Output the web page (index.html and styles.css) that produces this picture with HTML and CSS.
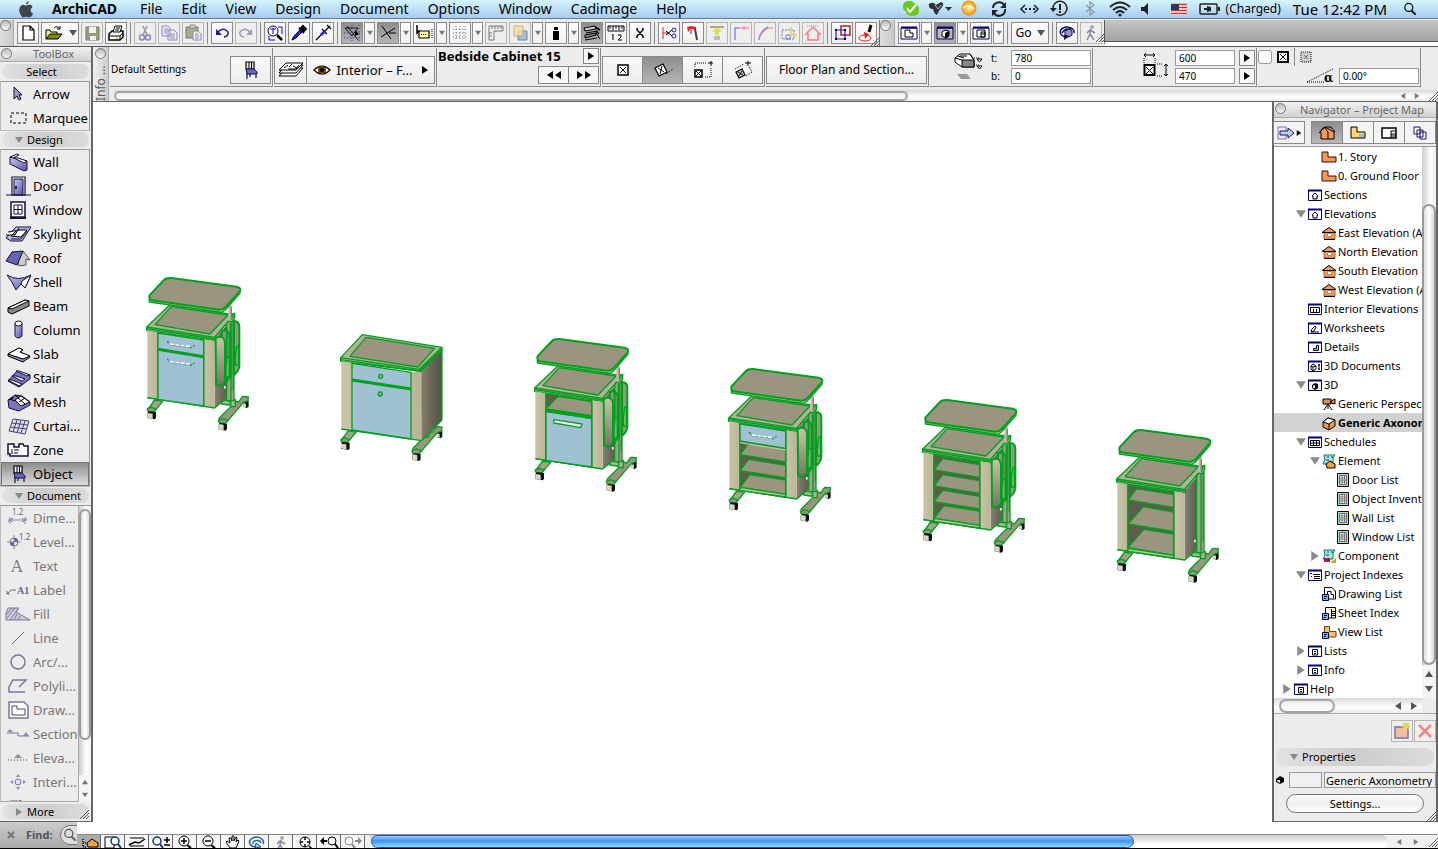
FILE: index.html
```html
<!DOCTYPE html>
<html lang="en">
<head>
<meta charset="utf-8">
<title>ArchiCAD</title>
<link rel="stylesheet" href="styles.css">
</head>
<body>
<svg class="defs" aria-hidden="true">
  <defs>
    <linearGradient id="g-side" x1="0" x2="1"><stop offset="0" stop-color="#858170"/><stop offset=".5" stop-color="#69665a"/><stop offset="1" stop-color="#555246"/></linearGradient>
    <linearGradient id="g-panel" x1="0" x2="1"><stop offset="0" stop-color="#c9c4a8"/><stop offset="1" stop-color="#bab596"/></linearGradient>
    <linearGradient id="g-bag" x1="0" y1="0" x2="0" y2="1"><stop offset="0" stop-color="#c9c4a8"/><stop offset="1" stop-color="#77735f"/></linearGradient>
    <linearGradient id="g-blue" x1="0" x2="1" y2="1"><stop offset="0" stop-color="#c8c8f4"/><stop offset="1" stop-color="#5555a8"/></linearGradient>
    <radialGradient id="g-sun"><stop offset="0" stop-color="#fff6c0"/><stop offset=".6" stop-color="#f8b830"/><stop offset="1" stop-color="#f08a10"/></radialGradient>

    <g id="foot-left"><path d="M74 420L98 424L76 450L52 450Z" fill="#a5a08a"/><path d="M52 447L64 442L78 447L72 455L54 454Z" fill="#99957f"/><path class="nl" d="M52 460L56 454L78 456V474L74 478L52 474Z" fill="#111"/><path class="nl" d="M52 459L68 461V477L52 473Z" fill="#dcd5c0"/></g>
    <g id="foot-right"><path class="nl" d="M342 425L356 422V440L350 444L340 440Z" fill="#111"/><path class="nl" d="M340 430L348 431V442L340 440Z" fill="#dcd5c0"/><path d="M275 420L320 424L318 438L275 432Z" fill="#b5b099"/><path d="M300 420L326 426L338 409L355 410L354 422L340 428L292 484L266 484L268 474L302 440Z" fill="#99957f"/><path d="M302 418H316V440H302Z" fill="#b5b099"/><path d="M265 482L278 476L294 482L286 490L268 489Z" fill="#99957f"/><path class="nl" d="M266 494L270 489L291 491V508L286 512L266 508Z" fill="#111"/><path class="nl" d="M266 492L281 494V511L266 508Z" fill="#dcd5c0"/></g>
    <g id="frame">
      <path class="nl" d="M254 236L304 180V390L285 418L254 444Z" fill="url(#g-side)"/>
      <path d="M290 180H312V422H290Z" fill="#a5a08a"/><path d="M303 180V420M310 180V390" fill="none"/>
      <path d="M286 168L314 160V174L306 184H288Z" fill="#a5a08a"/>
      <path d="M50 201L120 134L312 164L256 230V242L50 211Z" fill="#b5b099"/>
      <path d="M75 194L124 140L294 165L240 222Z" fill="#99957f"/>
      <path d="M50 201L254 232L308 170M50 206L254 237" fill="none"/>
      <path d="M52 211L84 217V419L52 413Z" fill="url(#g-panel)" class="nl"/><path d="M84 216V419M52 413L84 419" fill="none"/>
      <path class="nl" d="M221 238L254 243V444L221 438Z" fill="url(#g-panel)"/><path d="M221 236V438M52 413L254 444L290 414" fill="none"/>
      <path class="nl" d="M295 134H305V182H295Z" fill="#c9b9ab"/><path d="M304 140V180" fill="none" stroke="#8b7969"/>
      <path d="M58 117V126L276 157L286 150L330 100V88L280 140Z" fill="#c9c4a8"/>
      <path class="thick" d="M59 114Q54 108 66 98L102 60Q108 53 124 54L320 80Q336 84 329 94L290 138Q280 150 266 149L65 121Q59 120 59 114Z" fill="#99957f"/>
    </g>
    <g id="bags">
      <path class="thick" d="M312 183Q328 184 328 200V320Q325 335 312 345Z" fill="#99957f"/>
      <path class="thick" d="M276 212Q298 208 299 228V350Q292 366 277 366Z" fill="#99957f"/>
      <path class="thick" d="M290 208V370M302 190V356M311 184V342" fill="none"/>
      <path class="thick" d="M257 234Q284 222 285 252V365L273 377L258 374Z" fill="url(#g-bag)"/>
      <path d="M291 294L288 320V350H298V290ZM320 260L316 290V315H326V255Z" fill="#79b06b"/><path class="nl" fill="#eee" d="M282 378h5v8h-5z"/>
    </g>
    <g id="pull"><path d="M113 245L120 255L184 263L192 257" fill="none" stroke="#5d8a96" stroke-width="2"/><path d="M120 252L184 260" fill="none" stroke="#fff" stroke-width="4" stroke-dasharray="12 4"/><path class="nl" d="M111 243h5v5h-5zM180 260h5v5h-5zM190 255h4v4h-4z" fill="#00a11e"/></g>
    <g id="drawer"><path d="M84 219L221 240V292L84 270Z" fill="#a0c0d3"/><use href="#pull"/></g>
    <g id="cab-base"><use href="#foot-left"/><use href="#foot-right"/><use href="#frame"/></g>
    <path id="shelf" d="M84 38L110 4L221 22V60Z" fill="#99957f"/>

    <symbol id="new" viewBox="0 0 20 20"><path d="M5 3H12L16 7V17H5ZM12 3V7H16" fill="#fff" stroke="#000" stroke-width="1.200"/></symbol>
    <symbol id="open" viewBox="0 0 20 20"><path d="M2 16V7H6L7 9H13V11" fill="#ee8" stroke="#000"/><path d="M2 16L6 11H18L14 16Z" fill="#880" stroke="#000"/><path d="M10 5Q13 2 16 6M16 3V6H13" fill="none" stroke="#000"/></symbol>
    <symbol id="save" viewBox="0 0 20 20"><path d="M4 4H17V17H4Z" fill="#9b9b79" stroke="#777"/><path d="M7 4H14V10H7ZM8 13H14V17H8Z" fill="#eee"/></symbol>
    <symbol id="print" viewBox="0 0 20 20"><path d="M3 11L6 8H17V14L14 17H3Z" fill="#fff" stroke="#000" stroke-width="1.500"/><path d="M7 9L9 3H16L14 9Z" fill="#fff" stroke="#000"/><path d="M3 13H14L17 10M14 13V17M10 5H14M9 7H13" fill="none" stroke="#000"/><path d="M10 15H12" stroke="#cc0" stroke-width="1.500"/></symbol>
    <symbol id="cut" viewBox="0 0 20 20"><path d="M8 3L12 12M12 3L8 12" stroke="#999" stroke-width="1.500"/><circle cx="7" cy="14.500" r="2.500" fill="none" stroke="#8888bb" stroke-width="1.500"/><circle cx="13" cy="14.500" r="2.500" fill="none" stroke="#8888bb" stroke-width="1.500"/></symbol>
    <symbol id="copy" viewBox="0 0 20 20"><path d="M3 3H9L11 5V13H3ZM9 7H15L18 10V17H9Z" fill="#eee" stroke="#88b"/><path d="M5 6H9M5 8H8M5 10H8M11 11H16M11 13H16M11 15H16" stroke="#88b"/></symbol>
    <symbol id="paste" viewBox="0 0 20 20"><path d="M3 4H15V15H3Z" fill="#aaa988" stroke="#777"/><path d="M7 2H12V5H7Z" fill="#ddc" stroke="#888"/><path d="M10 8H15L18 11V17H10Z" fill="#eee" stroke="#88b"/><path d="M12 11H15M12 13H16M12 15H16" stroke="#88b"/></symbol>
    <symbol id="undo" viewBox="0 0 20 20"><path d="M5 10Q11 3 16 9Q17 13 12 14" fill="none" stroke="#1d1d8c" stroke-width="1.500"/><path d="M4 6V12H10Z" fill="#1d1d8c"/></symbol>
    <symbol id="redo" viewBox="0 0 20 20"><path d="M15 10Q9 3 4 9Q3 13 8 14" fill="none" stroke="#99a" stroke-width="1.500"/><path d="M16 6V12H10Z" fill="#99b"/></symbol>
    <symbol id="findsel" viewBox="0 0 20 20"><circle cx="8" cy="8" r="5" fill="#fff" stroke="#000"/><path d="M12 12L17 17" stroke="#000" stroke-width="2.500"/><path d="M8 5V11M5 6H11M13 4H17V11M4 13V17H10" fill="none" stroke="#00f"/></symbol>
    <symbol id="dropper" viewBox="0 0 20 20"><path d="M3 17L5 13L11 7L13 9L7 15Z" fill="#22f" stroke="#000"/><path d="M10 5L15 10M11 6L14 3L17 6L14 9Z" stroke="#000" stroke-width="2" fill="#000"/></symbol>
    <symbol id="syringe" viewBox="0 0 20 20"><path d="M3 17L8 12M12 8L17 3M14 2L18 6M9 6L14 11" stroke="#000" stroke-width="1.200"/><path d="M7 11L11 7L13 9L9 13Z" fill="#22f"/></symbol>
    <symbol id="guides" viewBox="0 0 20 20"><path d="M3 5H16L10 13ZM5 3L16 17" stroke="#111" fill="none"/><path d="M2 10H18M2 15H18M10 2V18M17 2V18" stroke="#33a" stroke-dasharray="1 2"/><path d="M13 7L17 11L13 13Z"/></symbol>
    <symbol id="snap" viewBox="0 0 20 20"><path d="M4 3L13 16M3 14L17 5M11 10H18" stroke="#000" fill="none"/></symbol>
    <symbol id="track" viewBox="0 0 20 20"><path d="M3 2V10L5 8L7 11" fill="none" stroke="#000" stroke-width="1.500"/><path d="M5 8H15V15H5Z" fill="#ffa" stroke="#000" stroke-width="1.200"/><path d="M7 11.500H13" stroke="#000" stroke-dasharray="1 1"/><path d="M18 6V16" stroke="#000" stroke-dasharray="1 1"/></symbol>
    <symbol id="grid" viewBox="0 0 20 20"><path d="M3 6H18M3 10H18M3 14H18M6 3V18M10 3V18M14 3V18" stroke="#66a" stroke-dasharray="1 2"/></symbol>
    <symbol id="ruler" viewBox="0 0 20 20"><path d="M3 3H17V8H8V17H3Z" fill="none" stroke="#777"/><path d="M6 3V6M9 3V6M12 3V6M15 3V6M3 10H6M3 13H6" stroke="#777"/></symbol>
    <symbol id="layers2" viewBox="0 0 20 20"><path d="M8 8H17V17H8Z" fill="#9cc0dd" stroke="#68a"/><path d="M4 3H13V13H4Z" fill="#f8e0a8" stroke="#c8a050" opacity=".8"/></symbol>
    <symbol id="weight" viewBox="0 0 20 20"><path d="M7 8H13V17H7ZM8 4H12V7H8Z"/></symbol>
    <symbol id="build" viewBox="0 0 20 20"><path d="M2 5L13 3L14 6L3 8ZM4 10L16 8M3 17L15 15M14 10L18 16" stroke="#000" fill="#ccc"/><path d="M3 12L14 10V12L3 15Z" fill="#888" stroke="#000"/><path d="M13 4L18 7M14 8L17 11" stroke="#000" stroke-width="1.500"/></symbol>
    <symbol id="measure" viewBox="0 0 20 20"><path d="M2 3H18V8H2ZM4 3V6M7 3V7M10 3V6M13 3V7M16 3V6" fill="#fff" stroke="#000"/><path d="M7 11V17M6 12H7M12 12H15V14L12 17H16" fill="none" stroke="#000"/></symbol>
    <symbol id="xtick" viewBox="0 0 20 20"><path d="M7 7L13 13M13 7L7 13M6 6H8M14 14H12M6 14H8M14 6H12" stroke="#000" stroke-width="1.500"/></symbol>
    <symbol id="trim" viewBox="0 0 20 20"><path d="M4 4V16M4 10H10" stroke="#d22"/><path d="M7 8L13 13M7 12L13 7" stroke="#000"/><circle cx="15" cy="7" r="2" fill="none" stroke="#228"/><circle cx="15" cy="13" r="2" fill="none" stroke="#228"/></symbol>
    <symbol id="axe" viewBox="0 0 20 20"><path d="M4 4L8 3L13 4V7L8 6L5 9Z" fill="#e22"/><path d="M12 6L14 17" stroke="#633" stroke-width="2"/><path d="M8 7V11" stroke="#22a"/></symbol>
    <symbol id="elev" viewBox="0 0 20 20"><path d="M3 4H17" stroke="#aa7" stroke-width="2"/><path d="M10 4L5 9H8V12H12V9H15Z" fill="#dd5"/><path d="M8 13V17M10 13V17M12 13V17" stroke="#888"/></symbol>
    <symbol id="corner" viewBox="0 0 20 20"><path d="M4 17V5H8" fill="none" stroke="#88e" stroke-width="1.500"/><path d="M8 5H18M13 3V7" stroke="#f77"/></symbol>
    <symbol id="fillet" viewBox="0 0 20 20"><path d="M4 17Q5 8 13 4" fill="none" stroke="#88e" stroke-width="1.500"/><path d="M12 5H18M4 14L9 8L13 5" stroke="#f77" fill="none"/></symbol>
    <symbol id="stretch" viewBox="0 0 20 20"><path d="M3 7H15V16H3Z" fill="none" stroke="#77a" stroke-dasharray="2 1"/><path d="M7 12H11V16H7Z" fill="none" stroke="#77d"/><path d="M12 4V12H18" fill="none" stroke="#dd5" stroke-width="1.500"/></symbol>
    <symbol id="roofup" viewBox="0 0 20 20"><path d="M4 3H16" stroke="#88b" stroke-dasharray="1 1"/><path d="M2 12L10 4L18 12M5 10V17H15V10" fill="none" stroke="#f77" stroke-width="1.500"/></symbol>
    <symbol id="editsel" viewBox="0 0 20 20"><path d="M9 3H18V12H9Z" fill="none" stroke="#a22" stroke-width="1.500"/><path d="M4 7H13V16H4Z" fill="none" stroke="#22a" stroke-width="1.200"/><path d="M3 6h2v2h-2zM12 6h2v2h-2zM3 15h2v2h-2zM12 15h2v2h-2z"/></symbol>
    <symbol id="pin" viewBox="0 0 20 20"><ellipse cx="9" cy="15" rx="6" ry="3" fill="none" stroke="#e22"/><path d="M15 2L13 9" stroke="#200" stroke-width="3"/><path d="M8 9L13 11L9 16Z" fill="#d22"/></symbol>
    <symbol id="plan" viewBox="0 0 20 20"><path d="M2 5H18V16H2Z" fill="#fff" stroke="#006"/><path d="M2 4.500H18" stroke="#006" stroke-width="2"/><path d="M6 7H11V10H14V14H6Z" fill="none" stroke="#000"/></symbol>
    <symbol id="cubewin" viewBox="0 0 20 20"><path d="M2 5H18V16H2Z" fill="#bbb" stroke="#006"/><path d="M2 4.500H18" stroke="#006" stroke-width="2"/><path d="M7 9L10 7L14 8V13L11 15L7 13Z" fill="#fff" stroke="#000"/><path d="M10 10L14 8V13L10 15Z"/></symbol>
    <symbol id="sheet" viewBox="0 0 20 20"><path d="M2 5H18V16H2Z" fill="#fff" stroke="#006"/><path d="M2 4.500H18" stroke="#006" stroke-width="2"/><path d="M6 7H14V14H6ZM10 9H14V14H10ZM10 11H14" fill="none" stroke="#000"/></symbol>
    <symbol id="orbit" viewBox="0 0 20 20"><path d="M9 14A7 5 0 1 1 17 10M5 10Q9 4 14 7" fill="none" stroke="#116" stroke-width="1.500"/><path d="M8 8L12 6L15 8V12L12 14L8 12Z" fill="#99b" stroke="#116"/><path d="M7 17L13 13L7 12Z" fill="#116"/></symbol>
    <symbol id="walk" viewBox="0 0 20 20"><circle cx="11" cy="4" r="2" fill="#9aaabb"/><path d="M10 6L9 11L6 17M9 11L13 17M6 10L9 7L14 10" fill="none" stroke="#8888a0" stroke-width="1.500"/></symbol>
    <symbol id="chair" viewBox="0 0 20 20"><path d="M5 2H13V9H5Z" fill="#eee" stroke="#000" stroke-width="1.200"/><path d="M8 2V9M10.500 2V9" stroke="#000"/><path d="M5 9H13L16 12V14H6Z" fill="#66b" stroke="#114"/><path d="M6 13V19M15 14V18M9 14V17" stroke="#114" stroke-width="1.200"/></symbol>
    <symbol id="stack" viewBox="0 0 30 20"><g fill="#fff" stroke="#000"><path d="M3 16L10 8H27L20 16Z"/><path d="M3 13L10 5H27L20 13Z"/><path d="M3 10L10 3H27L20 10Z"/><path d="M8 8L12 5M13 7L16 4M12 9H20L23 5M17 6L21 8"/></g></symbol>
    <symbol id="eye" viewBox="0 0 20 20"><path d="M2 10Q10 2 18 10Q10 18 2 10Z" fill="#fff" stroke="#000" stroke-width="1.200"/><circle cx="10" cy="10" r="4" fill="#753c00"/><circle cx="10" cy="10" r="2"/></symbol>
    <symbol id="an1" viewBox="0 0 20 20"><path d="M5 5H15V15H5Z" fill="#fff" stroke="#000" stroke-width="1.500"/><path d="M7 7L13 13M13 7L7 13" stroke="#000"/></symbol>
    <symbol id="an2" viewBox="0 0 20 20"><path d="M2 8L10 4L14 12L6 16Z" fill="#fff" stroke="#000" stroke-width="1.200"/><path d="M5 8L11 12M9 6L7 14" stroke="#000"/><path d="M13 14L20 9" stroke="#000" stroke-dasharray="1 1"/></symbol>
    <symbol id="an3" viewBox="0 0 20 20"><path d="M2 10H9V17H2Z" fill="#fff" stroke="#000" stroke-width="1.500"/><path d="M3 11L8 16M8 11L3 16M18 1V6M15 3H20" stroke="#000"/><path d="M2 7V3H14M18 8V17H11" fill="none" stroke="#000" stroke-dasharray="1 1"/></symbol>
    <symbol id="an4" viewBox="0 0 20 20"><path d="M3 12L9 9L12 15L6 18Z" fill="#ccc" stroke="#000" stroke-width="1.200"/><path d="M5 12L10 15M9 11L6 16M15 1V6M12 3H18" stroke="#000"/><path d="M2 9L11 4M16 7L19 12L13 16" fill="none" stroke="#000" stroke-dasharray="1 1"/></symbol>

    <symbol id="arrow" viewBox="0 0 26 20"><path d="M9 3V15L12 12L14 16L16 15L14 11H17Z" fill="#99c" stroke="#113"/></symbol>
    <symbol id="marquee" viewBox="0 0 26 20"><path d="M6 5H21V15H6Z" fill="none" stroke="#000" stroke-dasharray="3 2"/></symbol>
    <symbol id="wall" viewBox="0 0 26 20"><path d="M5 5L22 9V18L19 19L5 12Z" fill="url(#g-blue)" stroke="#113"/><path d="M5 5L12 2L14 3L8 6ZM13 6L22 9L19 11L9 6Z" fill="#fff" stroke="#113"/></symbol>
    <symbol id="door" viewBox="0 0 26 20"><path d="M7 1H20V19H7Z" fill="#fff" stroke="#113" stroke-width="1.200"/><path d="M9 3H18V19H9Z" fill="url(#g-blue)" stroke="#113"/><path d="M1 19H26" stroke="#113"/><path d="M11 10v3" stroke="#000" stroke-width="1.500"/></symbol>
    <symbol id="window" viewBox="0 0 26 20"><path d="M6 2H20V17H6Z" fill="#fff" stroke="#114" stroke-width="1.500"/><path d="M9 5H17V14H9ZM13 5V14M9 9.500H17" fill="none" stroke="#114"/><path d="M5 18H21" stroke="#114" stroke-width="2"/></symbol>
    <symbol id="skylight" viewBox="0 0 26 20"><path d="M1 14L11 3H26L17 17H6Z" fill="#b8b8e6" stroke="#114"/><path d="M6 12L12 6H22L16 13ZM1 11H10L14 4" fill="#fff" stroke="#000"/><path d="M3 8L14 6M6 15H16L22 7" fill="none" stroke="#114"/></symbol>
    <symbol id="roof" viewBox="0 0 26 20"><path d="M18 3L25 12L21 11V17L14 18L13 14Z" fill="#ccc" stroke="#555"/><path d="M1 13L7 4L18 3L12 17Z" fill="#6565b4" stroke="#114"/></symbol>
    <symbol id="shell" viewBox="0 0 26 20"><path d="M2 3Q13 10 26 3L20 16L16 12L11 18Q7 9 2 3Z" fill="url(#g-blue)" stroke="#114"/><path d="M17 9L26 3L20 16L16 12Z" fill="#fff" stroke="#114"/></symbol>
    <symbol id="beam" viewBox="0 0 26 20"><path d="M3 12L20 4L24 5V10L7 18L3 16Z" fill="#888" stroke="#000"/><path d="M3 12L20 4L24 5L7 13Z" fill="#fff" stroke="#000"/></symbol>
    <symbol id="column" viewBox="0 0 26 20"><path d="M10 3V16Q13 20 17 16V3" fill="url(#g-blue)" stroke="#114"/><ellipse cx="13.500" cy="3.500" rx="3.500" ry="2.500" fill="#fff" stroke="#114"/></symbol>
    <symbol id="slab" viewBox="0 0 26 20"><path d="M3 10L14 4L18 6L15 8L25 13L18 18L3 12Z" fill="#88c" stroke="#000"/><path d="M3 10L14 4L18 6L15 8L25 12L18 15Z" fill="#fff" stroke="#000"/></symbol>
    <symbol id="stair" viewBox="0 0 26 20"><path d="M3 13L12 3L25 7V11L14 19Z" fill="#77b" stroke="#114"/><path d="M11 3H14L25 7L22 8ZM7 8H11L20 11L17 13ZM3 12H7L17 16L14 18Z" fill="#fff" stroke="#114"/></symbol>
    <symbol id="mesh" viewBox="0 0 26 20"><path d="M3 8L10 3L17 4L25 10V13L14 19L4 16Z" fill="#77b" stroke="#114"/><path d="M10 8L16 4L25 10L16 14ZM13 6L20 12M10 3L14 6M5 7L10 9M14 10L20 6M4 8L9 5" fill="#fff" stroke="#000"/></symbol>
    <symbol id="curtain" viewBox="0 0 26 20"><path d="M8 3L24 5L20 18L4 15Z" fill="#dde" stroke="#447"/><path d="M12 4L8 16M16 4L12 17M20 5L16 17M7 7L23 9M5 11L22 13" stroke="#447"/></symbol>
    <symbol id="zone" viewBox="0 0 26 20"><path d="M3 4H9V7H14V4H18L19 6H23V16H5V14H3Z" fill="#fff" stroke="#114" stroke-width="1.500"/><path d="M9 10H14M9 13H13M7 9V14" stroke="#000"/></symbol>
    <symbol id="object" viewBox="0 0 26 20"><use href="#chair" x="4" width="20" height="20"/></symbol>
    <symbol id="dim" viewBox="0 0 26 20"><text x="7" y="7" class="svgtxt">1.2</text><path d="M3 12H22M5 9V16M20 9V16M3 14L7 10M18 14L22 10M8 10L5 12L8 14M17 10L20 12L17 14" fill="none" stroke="#88a"/></symbol>
    <symbol id="level" viewBox="0 0 26 20"><text x="14" y="8" class="svgtxt">1.2</text><circle cx="9" cy="10" r="4" fill="#fff" stroke="#668"/><path d="M9 10V6A4 4 0 0 1 13 10ZM9 10V14A4 4 0 0 1 5 10Z" fill="#668"/><path d="M2 10H16M9 3V17" stroke="#88a"/></symbol>
    <symbol id="text" viewBox="0 0 26 20"><text x="6" y="16" class="svgserif">A</text></symbol>
    <symbol id="label" viewBox="0 0 26 20"><text x="12" y="14" class="svgbold">A1</text><path d="M2 14L6 10H11M2 11V14H5" fill="none" stroke="#668"/></symbol>
    <symbol id="fill" viewBox="0 0 26 20"><path d="M3 4H14L11 8L25 16H1V9Z" fill="#ccd" stroke="#779"/><path d="M2 10L7 4M2 14L10 4M5 16L13 5M9 16L12 10M13 16L15 12" stroke="#779"/></symbol>
    <symbol id="line" viewBox="0 0 26 20"><path d="M7 16L19 4" stroke="#668"/></symbol>
    <symbol id="arc" viewBox="0 0 26 20"><circle cx="13" cy="10" r="7" fill="none" stroke="#779" stroke-width="1.500"/></symbol>
    <symbol id="poly" viewBox="0 0 26 20"><path d="M20 16H4V11L8 4H21L14 11" fill="none" stroke="#779" stroke-width="1.500"/></symbol>
    <symbol id="drawing" viewBox="0 0 26 20"><path d="M4 2H19L23 6V18H4Z" fill="#fff" stroke="#779" stroke-width="1.500"/><path d="M7 6H12V9H20V15H7Z" fill="none" stroke="#446"/></symbol>
    <symbol id="section" viewBox="0 0 26 20"><path d="M2 9H13V12H24" fill="none" stroke="#779"/><path d="M2 8L5 5L8 8ZM18 12L21 8L24 12Z" fill="#88b"/></symbol>
    <symbol id="elevation" viewBox="0 0 26 20"><path d="M3 12H24" stroke="#446" stroke-dasharray="1 2"/><path d="M9 10L13 6L17 10Z" fill="#88b"/></symbol>
    <symbol id="interior" viewBox="0 0 26 20"><circle cx="13" cy="10" r="3" fill="#ddf" stroke="#779"/><path d="M11 5L13 2L15 5ZM11 15L13 18L15 15ZM8 8L5 10L8 12ZM18 8L21 10L18 12Z" fill="#88b"/></symbol>
    <symbol id="worksheet" viewBox="0 0 26 20"><path d="M5 5H13V18H5ZM11 8L15 4L20 8V18H11Z" fill="#dde" stroke="#668"/></symbol>

    <symbol id="t-story" viewBox="0 0 16 16"><path d="M1 3H7V8H15V13H1Z" fill="#f4985a" stroke="#311"/></symbol>
    <symbol id="t-house" viewBox="0 0 16 16"><path d="M3 7V14H14V7Z" fill="#f4985a" stroke="#a63"/><path d="M1 7.500L8 2.500L15 7.500Z" fill="#f4985a" stroke="#000"/><path d="M3 14.500H14" stroke="#000"/><path d="M6.500 8.500H10.500V11.500H6.500Z" fill="#fff" stroke="#996"/></symbol>
    <symbol id="w" viewBox="0 0 16 16"><path d="M1.500 3.500H14.500V13.500H1.500Z" fill="#fff" stroke="#000078"/><path d="M1 3.500H15" stroke="#000078" stroke-width="2"/></symbol>
    <symbol id="t-sec" viewBox="0 0 16 16"><use href="#w"/><path d="M5 9L8 6L11 9H10V12H6V9Z" fill="none" stroke="#000"/></symbol>
    <symbol id="t-int" viewBox="0 0 16 16"><use href="#w"/><path d="M3.500 6.500H12.500V11.500H3.500ZM6.500 8V11M9.500 8V11" fill="none" stroke="#000"/></symbol>
    <symbol id="t-wor" viewBox="0 0 16 16"><use href="#w"/><path d="M4 12L5 9L8 6L9 7L7 11ZM4 12H12" fill="none" stroke="#000"/></symbol>
    <symbol id="t-det" viewBox="0 0 16 16"><use href="#w"/><path d="M9.500 6.500H11.500V11.500H6.500V9.500H9.500Z" fill="#ccc" stroke="#000"/></symbol>
    <symbol id="t-doc" viewBox="0 0 16 16"><use href="#w"/><path d="M4 8L6 6L9 8V11L6 13L4 11ZM4 8L6 9L9 8M6 9V12M12 6V12M11 7H13M11 11H13" fill="none" stroke="#000"/></symbol>
    <symbol id="t-3d" viewBox="0 0 16 16"><use href="#w"/><path d="M5 8L8 6L11 7V11L8 13L5 11Z"/><path d="M6 9L8 8V11L6 11Z" fill="#fff"/></symbol>
    <symbol id="t-cam" viewBox="0 0 16 16"><path d="M2 3H10V8H2ZM10 5L14 3V8L10 7Z" fill="#e98a4a" stroke="#000"/><path d="M7 8L3 14M7 8V13M7 8L11 14" stroke="#000"/></symbol>
    <symbol id="t-axo" viewBox="0 0 16 16"><path d="M2 7L7 3L14 5V11L8 15L2 12Z" fill="#f4985a" stroke="#000"/><path d="M2 7L7 3L14 5L8 9Z" fill="#fff" stroke="#000"/><path d="M8 9V15" stroke="#000"/></symbol>
    <symbol id="t-sch" viewBox="0 0 16 16"><use href="#w"/><path d="M3.500 6.500H12.500V11.500H3.500ZM3 9H13M6.500 6V12M9.500 6V12" fill="none" stroke="#000"/></symbol>
    <symbol id="t-elem" viewBox="0 0 16 16"><path d="M3 2H14L12 5V11H2L4 7Z" fill="#a9ecdc" stroke="#175"/><path d="M6 4H8M10 4H12M5 7H8" stroke="#22a"/><path d="M5 11L9 8L14 11V15H6Z" fill="#f4a040" stroke="#000"/></symbol>
    <symbol id="t-comp" viewBox="0 0 16 16"><path d="M3 2H14L12 5V11H2L4 7Z" fill="#a9ecdc" stroke="#175"/><path d="M6 4H8M10 4H12M5 7H8" stroke="#22a"/><path d="M3 10H9V14H3Z" fill="#a12050"/><path d="M9 15L15 10V15Z" fill="#d8a020"/></symbol>
    <symbol id="t-list" viewBox="0 0 16 16"><path d="M2.500 1.500H13.500V14.500H2.500Z" fill="#a6e2cc" stroke="#000"/><path d="M4.500 3.500H11.500V12.500H4.500Z" fill="#fff" stroke="#666"/><path d="M4 6H12M4 8H12M4 10H12M7 4V13M9.500 4V13" stroke="#777"/></symbol>
    <symbol id="t-idx" viewBox="0 0 16 16"><use href="#w"/><path d="M3 6.500H5M6 7.500H13M4 9.500H5M7 9.500H13M7 11.500H13" stroke="#000"/></symbol>
    <symbol id="t-dl" viewBox="0 0 16 16"><path d="M3.500 1.500H11L14.500 5V13H3.500Z" fill="#fff" stroke="#000"/><path d="M6.500 9V5.500H10V8.500H12.500V12" fill="none" stroke="#000"/><path d="M1.500 8.500H7.500V14.500H1.500Z" fill="#7bb9f0" stroke="#003"/><path d="M3 10.500H6M3 12.500H5" stroke="#003"/></symbol>
    <symbol id="t-si" viewBox="0 0 16 16"><path d="M4.500 2.500H14.500V13H4.500Z" fill="#ffd" stroke="#000"/><path d="M10.500 4V13M11 6.500H15M11 8.500H15M11 10.500H15" stroke="#000"/><path d="M1.500 8.500H7.500V14.500H1.500Z" fill="#7bb9f0" stroke="#003"/><path d="M3 10.500H6M3 12.500H5" stroke="#003"/></symbol>
    <symbol id="t-vl" viewBox="0 0 16 16"><path d="M3.500 2.500H8.500V7.500H15V13H3.500Z" fill="#f0c070" stroke="#642"/><path d="M1.500 8.500H7.500V14.500H1.500Z" fill="#7bb9f0" stroke="#003"/><path d="M3 10.500H6M3 12.500H5" stroke="#003"/></symbol>
    <symbol id="t-info" viewBox="0 0 16 16"><use href="#w"/><path d="M5.500 6.500H10.500V12H5.500ZM7 8.500H9M7 10.500H9" fill="none" stroke="#000"/></symbol>

    <symbol id="glass" viewBox="0 0 20 20"><circle cx="8.500" cy="8" r="5" fill="none" stroke="currentColor" stroke-width="1.500"/><path d="M12 12L17 17" stroke="currentColor" stroke-width="2.500"/></symbol>
    <symbol id="grip" viewBox="0 0 10 10"><path d="M1 10L10 1M4 10L10 4M7 10L10 7" stroke="#555"/></symbol>
    <symbol id="tri-r" viewBox="0 0 8 8"><path d="M1 0L7 4L1 8Z" fill="currentColor"/></symbol>
    <symbol id="tri-l" viewBox="0 0 8 8"><path d="M7 0L1 4L7 8Z" fill="currentColor"/></symbol>
    <symbol id="tri-d" viewBox="0 0 8 8"><path d="M0 1H8L4 7Z" fill="currentColor"/></symbol>
    <symbol id="tri-u" viewBox="0 0 8 8"><path d="M0 7H8L4 1Z" fill="currentColor"/></symbol>
  </defs>
</svg>

<header class="menubar">
  <svg class="apple" viewBox="0 0 16 18"><path d="M8 5Q10 3.500 12.500 4Q14 4.500 15 6Q12.500 8 13 10.500Q13.500 12.500 15.500 13.500Q13.500 17.500 11.500 17.500Q10 16.800 8.500 16.800Q7 16.800 5.500 17.500Q3.500 17.500 1.500 13Q0 9 1.500 6.500Q3 4 5 4Q7 4.500 8 5ZM8 3.500Q8 1 11 0Q11 3 8 3.500Z" fill="#3f454b"/></svg>
  <nav class="menus"><a href="#" class="app">ArchiCAD</a><a href="#">File</a><a href="#">Edit</a><a href="#">View</a><a href="#">Design</a><a href="#">Document</a><a href="#">Options</a><a href="#">Window</a><a href="#">Cadimage</a><a href="#">Help</a></nav>
  <div class="status">
    <svg viewBox="0 0 30 18"><rect x="7" y="1" width="12" height="11" rx="5" fill="#6cc81e"/><rect x="10" y="4" width="13" height="12" rx="5" fill="#6cc81e"/><path d="M11 8L14 12L20 5" fill="none" stroke="#fff" stroke-width="2"/></svg>
    <svg viewBox="0 0 30 18"><path d="M3 4Q7 1 10 5L15 2Q19 3 16 7Q13 10 11 15Q8 14 7 9Q2 9 3 4Z" fill="#333"/><path d="M9 5L12 9L15 5" stroke="#bbb" fill="none"/><path d="M19 7H26L22.500 11Z" fill="#333"/></svg>
    <svg viewBox="0 0 30 18"><circle cx="13" cy="8" r="7.500" fill="url(#g-sun)"/><path d="M7 8Q12 3 18 9" stroke="#fff" fill="none" stroke-width="2" opacity=".7"/></svg>
    <svg viewBox="0 0 30 18"><path d="M7 8A6 6 0 0 1 18 5M19 9A6 6 0 0 1 8 13" fill="none" stroke="#222" stroke-width="2"/><path d="M20 2V8H14ZM6 16V10H12Z" fill="#222"/></svg>
    <svg viewBox="0 0 30 18"><path d="M9 5L5 9L9 13M18 5L22 9L18 13" fill="none" stroke="#222" stroke-width="1.500"/><path d="M9 9H19" stroke="#222" stroke-width="2" stroke-dasharray="2 2"/></svg>
    <svg viewBox="0 0 30 18"><path d="M7 9A7 7 0 1 1 10 14" fill="none" stroke="#222" stroke-width="1.500"/><path d="M4 8H11L7 12ZM13 4H15V10H13ZM13 11H15V13H13Z" fill="#222"/></svg>
    <svg viewBox="0 0 30 18"><path d="M10 5L18 12L14 15V2L18 5L10 12" fill="none" stroke="#8b98a8" stroke-width="1.200"/></svg>
    <svg viewBox="0 0 30 18"><path d="M4 7Q14-2 24 7M7 10Q14 4 21 10M10 13Q14 9 18 13" fill="none" stroke="#222" stroke-width="2"/><circle cx="14" cy="15" r="1.500" fill="#222"/></svg>
    <svg viewBox="0 0 30 18"><path d="M5 7H8L12 3V15L8 11H5Z" fill="#222"/></svg>
    <svg viewBox="0 0 30 18"><path d="M5 4H21V15H5Z" fill="#fff"/><path d="M5 4.500H21M5 7.500H21M5 10.500H21M5 13.500H21" stroke="#d92a2a" stroke-width="1.500"/><path d="M5 4H13V10H5Z" fill="#335"/></svg>
    <svg viewBox="0 0 30 18"><rect x="4" y="4" width="17" height="10" rx="1" fill="none" stroke="#222" stroke-width="1.500"/><path d="M22 7H24V11H22ZM8 8H11V6L15 7V11L11 12V10H8Z" fill="#222"/></svg>
    <span class="charged">(Charged)</span><span class="clock">Tue 12:42 PM</span>
    <svg class="spot" viewBox="0 0 20 20"><use href="#glass"/></svg>
  </div>
</header>

<div class="toolbar">
  <span class="handle"><i class="knob"></i></span>
  <button class="tb" aria-label="New"><svg><use href="#new"/></svg></button>
  <button class="tb wide" aria-label="Open"><svg><use href="#open"/></svg><svg class="t8"><use href="#tri-d"/></svg></button>
  <button class="tb dim" aria-label="Save"><svg><use href="#save"/></svg></button>
  <button class="tb" aria-label="Print"><svg><use href="#print"/></svg></button>
  <i class="sep"></i>
  <button class="tb dim" aria-label="Cut"><svg><use href="#cut"/></svg></button>
  <button class="tb dim" aria-label="Copy"><svg><use href="#copy"/></svg></button>
  <button class="tb dim" aria-label="Paste"><svg><use href="#paste"/></svg></button>
  <i class="sep"></i>
  <button class="tb" aria-label="Undo"><svg><use href="#undo"/></svg></button>
  <button class="tb dim" aria-label="Redo"><svg><use href="#redo"/></svg></button>
  <i class="sep"></i>
  <button class="tb" aria-label="Find and Select"><svg><use href="#findsel"/></svg></button>
  <button class="tb" aria-label="Pick up parameters"><svg><use href="#dropper"/></svg></button>
  <button class="tb" aria-label="Inject parameters"><svg><use href="#syringe"/></svg></button>
  <i class="sep"></i>
  <span class="split"><button class="tb on" aria-label="Guide lines"><svg><use href="#guides"/></svg></button><button class="tb slim" aria-label="Guide options"><svg class="t6"><use href="#tri-d"/></svg></button></span>
  <span class="split"><button class="tb on" aria-label="Snap"><svg><use href="#snap"/></svg></button><button class="tb slim" aria-label="Snap options"><svg class="t6"><use href="#tri-d"/></svg></button></span>
  <span class="split"><button class="tb" aria-label="Tracker"><svg><use href="#track"/></svg></button><button class="tb slim" aria-label="Tracker options"><svg class="t6"><use href="#tri-d"/></svg></button></span>
  <span class="split"><button class="tb" aria-label="Grid"><svg><use href="#grid"/></svg></button><button class="tb slim" aria-label="Grid options"><svg class="t6"><use href="#tri-d"/></svg></button></span>
  <button class="tb dim" aria-label="Rulers"><svg><use href="#ruler"/></svg></button>
  <span class="split"><button class="tb dim" aria-label="Trace"><svg><use href="#layers2"/></svg></button><button class="tb slim" aria-label="Trace options"><svg class="t6"><use href="#tri-d"/></svg></button></span>
  <span class="split"><button class="tb" aria-label="Gravity"><svg><use href="#weight"/></svg></button><button class="tb slim" aria-label="Gravity options"><svg class="t6"><use href="#tri-d"/></svg></button></span>
  <button class="tb on" aria-label="Groups"><svg><use href="#build"/></svg></button>
  <button class="tb" aria-label="Measure"><svg><use href="#measure"/></svg></button>
  <button class="tb" aria-label="Intersect"><svg><use href="#xtick"/></svg></button>
  <i class="sep"></i>
  <button class="tb" aria-label="Trim"><svg><use href="#trim"/></svg></button>
  <button class="tb" aria-label="Split"><svg><use href="#axe"/></svg></button>
  <button class="tb dim" aria-label="Adjust"><svg><use href="#elev"/></svg></button>
  <button class="tb dim" aria-label="Corner"><svg><use href="#corner"/></svg></button>
  <button class="tb dim" aria-label="Fillet"><svg><use href="#fillet"/></svg></button>
  <button class="tb dim" aria-label="Stretch"><svg><use href="#stretch"/></svg></button>
  <button class="tb dim" aria-label="Roof"><svg><use href="#roofup"/></svg></button>
  <i class="sep"></i>
  <button class="tb" aria-label="Edit selection"><svg><use href="#editsel"/></svg></button>
  <button class="tb" aria-label="Marker"><svg><use href="#pin"/></svg></button>
  <span class="handle second"><svg class="grip"><use href="#grip"/></svg><i class="knob"></i></span>
  <span class="split"><button class="tb" aria-label="Floor plan"><svg><use href="#plan"/></svg></button><button class="tb slim" aria-label="Plan options"><svg class="t6"><use href="#tri-d"/></svg></button></span>
  <span class="split"><button class="tb on" aria-label="3D window"><svg><use href="#cubewin"/></svg></button><button class="tb slim" aria-label="3D options"><svg class="t6"><use href="#tri-d"/></svg></button></span>
  <span class="split"><button class="tb" aria-label="Layout"><svg><use href="#sheet"/></svg></button><button class="tb slim" aria-label="Layout options"><svg class="t6"><use href="#tri-d"/></svg></button></span>
  <i class="sep"></i>
  <button class="tb wide">Go<svg class="t8"><use href="#tri-d"/></svg></button>
  <i class="sep"></i>
  <button class="tb" aria-label="Orbit"><svg><use href="#orbit"/></svg></button>
  <button class="tb dim" aria-label="Explore"><svg><use href="#walk"/></svg></button>
  <span class="window-edge"><svg class="grip"><use href="#grip"/></svg></span>
</div>

<main class="work">
  <aside class="toolbox">
    <h2 class="title"><i class="knob"></i>ToolBox</h2>
    <h3 class="pill center">Select</h3>
    <div class="tools">
      <button class="tool"><svg><use href="#arrow"/></svg>Arrow</button>
      <button class="tool"><svg><use href="#marquee"/></svg>Marquee</button>
    </div>
    <h3 class="pill"><svg class="t8"><use href="#tri-d"/></svg>Design</h3>
    <div class="tools">
      <button class="tool"><svg><use href="#wall"/></svg>Wall</button>
      <button class="tool"><svg><use href="#door"/></svg>Door</button>
      <button class="tool"><svg><use href="#window"/></svg>Window</button>
      <button class="tool"><svg><use href="#skylight"/></svg>Skylight</button>
      <button class="tool"><svg><use href="#roof"/></svg>Roof</button>
      <button class="tool"><svg><use href="#shell"/></svg>Shell</button>
      <button class="tool"><svg><use href="#beam"/></svg>Beam</button>
      <button class="tool"><svg><use href="#column"/></svg>Column</button>
      <button class="tool"><svg><use href="#slab"/></svg>Slab</button>
      <button class="tool"><svg><use href="#stair"/></svg>Stair</button>
      <button class="tool"><svg><use href="#mesh"/></svg>Mesh</button>
      <button class="tool"><svg><use href="#curtain"/></svg>Curtai...</button>
      <button class="tool"><svg><use href="#zone"/></svg>Zone</button>
      <button class="tool on"><svg><use href="#object"/></svg>Object</button>
    </div>
    <h3 class="pill"><svg class="t8"><use href="#tri-d"/></svg>Document</h3>
    <div class="doc">
      <div class="tools grey">
        <button class="tool"><svg><use href="#dim"/></svg>Dime...</button>
        <button class="tool"><svg><use href="#level"/></svg>Level...</button>
        <button class="tool"><svg><use href="#text"/></svg>Text</button>
        <button class="tool"><svg><use href="#label"/></svg>Label</button>
        <button class="tool"><svg><use href="#fill"/></svg>Fill</button>
        <button class="tool"><svg><use href="#line"/></svg>Line</button>
        <button class="tool"><svg><use href="#arc"/></svg>Arc/...</button>
        <button class="tool"><svg><use href="#poly"/></svg>Polyli...</button>
        <button class="tool"><svg><use href="#drawing"/></svg>Draw...</button>
        <button class="tool"><svg><use href="#section"/></svg>Section</button>
        <button class="tool"><svg><use href="#elevation"/></svg>Eleva...</button>
        <button class="tool"><svg><use href="#interior"/></svg>Interi...</button>
        <button class="tool"><svg><use href="#worksheet"/></svg>Work...</button>
      </div>
      <div class="vscroll"><i class="vthumb tb-thumb"></i><span class="varr"><svg class="t6"><use href="#tri-u"/></svg><svg class="t6"><use href="#tri-d"/></svg></span></div>
    </div>
    <h3 class="pill more"><svg class="t8"><use href="#tri-r"/></svg>More<svg class="grip"><use href="#grip"/></svg></h3>
  </aside>

  <div class="stage">
    <section class="info">
      <div class="infohandle"><i class="knob"></i><span>Info ...</span></div>
      <div class="infobody">
        <div class="panels">
          <div class="panel p-default"><span>Default Settings</span><button class="big" aria-label="Object settings"><svg><use href="#chair"/></svg></button></div>
          <div class="panel p-layer"><button class="big lay" aria-label="Layers"><svg class="w30"><use href="#stack"/></svg></button><button class="big name"><svg><use href="#eye"/></svg><span>Interior – F...</span><svg class="t8"><use href="#tri-r"/></svg></button></div>
          <div class="panel p-part"><b>Bedside Cabinet 15</b><button class="mini" aria-label="Choose"><svg class="t8"><use href="#tri-r"/></svg></button><span class="prevnext"><button class="mini" aria-label="Previous"><svg class="t8"><use href="#tri-l"/></svg><svg class="t8"><use href="#tri-l"/></svg></button><button class="mini" aria-label="Next"><svg class="t8"><use href="#tri-r"/></svg><svg class="t8"><use href="#tri-r"/></svg></button></span></div>
          <div class="panel p-anchor"><button class="big" aria-label="Fixed"><svg><use href="#an1"/></svg></button><button class="big on" aria-label="Rotated"><svg><use href="#an2"/></svg></button><button class="big" aria-label="Diagonal"><svg><use href="#an3"/></svg></button><button class="big" aria-label="Diagonal rotated"><svg><use href="#an4"/></svg></button></div>
          <div class="panel p-floor"><button class="big">Floor Plan and Section...</button></div>
          <div class="panel p-height">
            <svg class="w34" viewBox="0 0 34 34"><path d="M3 8L8 4H18L22 10V17H10L3 12Z" fill="#fff" stroke="#000"/><path d="M10 10H22V17H10Z" fill="#888" stroke="#000"/><path d="M3 8L10 10M8 6H15M18 4L22 10M6 6L12 8" stroke="#000"/><path d="M22 8H28M22 15H28" stroke="#000" stroke-dasharray="1 1"/><path d="M25 9H30L27.500 12ZM25 16H30L27.500 19Z" fill="#fff" stroke="#000"/><path d="M5 24H15L19 29H9Z" fill="#999"/></svg>
            <div class="fields"><label>t:<input value="780"></label><label>b:<input value="0"></label></div>
          </div>
          <div class="panel p-size">
            <svg class="w34" viewBox="0 0 34 34"><path d="M5 5H16M7 3L5 5L7 7M14 3L16 5L14 7M27 14V26M25 16L27 14L29 16M25 24L27 26L29 24" fill="none" stroke="#000"/><path d="M5 8V14M16 8V14M18 14H24M18 26H24" stroke="#000" stroke-dasharray="1 1"/><path d="M5.500 15H15.500V25H5.500Z" fill="#fff" stroke="#000" stroke-width="2"/><path d="M7 17L14 24M14 17L7 24" stroke="#000"/></svg>
            <div class="fields"><span><input aria-label="Width" value="600"><button class="mini" aria-label="Width menu"><svg class="t8"><use href="#tri-r"/></svg></button></span><span><input aria-label="Depth" value="470"><button class="mini" aria-label="Depth menu"><svg class="t8"><use href="#tri-r"/></svg></button></span></div>
          </div>
          <div class="panel p-angle">
            <div class="line"><input type="checkbox" aria-label="Mirror"><svg class="s14" viewBox="0 0 14 14"><path d="M2 2H12V12H2Z" fill="#fff" stroke="#000" stroke-width="2"/><path d="M4 4L10 10M10 4L4 10" stroke="#000"/></svg><i class="vline"></i><svg class="s14" viewBox="0 0 14 14"><path d="M2 2H12V12H2Z" fill="#ccc" stroke="#777" stroke-width="2" stroke-dasharray="1 1"/><path d="M5 5L9 9M9 5L5 9" stroke="#777"/></svg></div>
            <div class="line end"><svg class="w30" viewBox="0 0 30 16"><path d="M2 14L28 1M2 14H20" stroke="#000" stroke-dasharray="1 1"/><text x="19" y="14" class="alpha">α</text></svg><input aria-label="Angle" value="0.00°"></div>
          </div>
        </div>
        <div class="hscroll"><i class="hthumb info-thumb"></i><i class="fillr"></i><svg class="t6"><use href="#tri-l"/></svg><svg class="t6"><use href="#tri-r"/></svg><svg class="grip"><use href="#grip"/></svg></div>
      </div>
    </section>

    <div class="view">
      <div class="canvas">
        <svg class="model" viewBox="93 102 1179 720" width="1179" height="720" role="img" aria-label="Six bedside cabinets in axonometric view">
          <g transform="translate(130 260) scale(.3333)" class="cad">
            <use href="#cab-base"/>
            <path d="M84 219L221 240V438L84 418Z" fill="#a0c0d3"/><use href="#pull"/><use href="#pull" y="53"/>
            <path d="M84 268L221 290" stroke-width="9"/><use href="#bags"/>
          </g>
          <g transform="translate(130 260) scale(.3333)" class="cad">
            <use href="#foot-left" x="581" y="92"/><use href="#foot-right" x="581" y="91"/>
            <path class="nl" d="M872 335L936 268V482L874 542Z" fill="url(#g-side)"/>
            <path d="M632 293L697 224L936 262V270L872 334L632 304Z" fill="#b5b099"/><path d="M660 289L708 232L914 265L864 321Z" fill="#99957f"/>
            <path d="M632 293L868 328L936 262M632 299L868 333L936 268V480" fill="none"/>
            <path class="nl" d="M634 304L666 308V512L634 507ZM843 336L875 336V542L843 537Z" fill="url(#g-panel)"/>
            <path d="M666 310L843 337V537L666 510Z" fill="#a0c0d3"/><path d="M666 360L843 387" stroke-width="9"/><path d="M634 507L875 542L936 480" fill="none"/>
            <circle cx="752" cy="349" r="6" fill="#99b890"/><circle cx="751" cy="402" r="6" fill="#99b890"/>
          </g>
          <g transform="translate(518 321) scale(.3333)" class="cad">
            <use href="#cab-base"/><path d="M84 218L221 240V438L84 418Z" fill="#5f5c4e"/><path d="M84 264L120 226L221 242V284Z" fill="#99957f"/>
            <path d="M84 272L221 292V438L84 418Z" fill="#a0c0d3"/><path d="M84 268L221 290" stroke-width="9"/><path d="M107 296L192 309L188 320L108 306Z" fill="#fff"/><use href="#bags"/>
          </g>
          <g transform="translate(712 351) scale(.3333)" class="cad">
            <use href="#cab-base"/><path d="M84 218L221 240V438L84 418Z" fill="#5f5c4e"/>
            <use href="#shelf" y="273"/><use href="#shelf" y="321"/><path d="M84 409L114 371L221 387V430Z" fill="#99957f"/><path d="M84 409L221 430V438L84 418Z" fill="#c4bfa0"/>
            <use href="#drawer"/><path d="M84 275L221 297" stroke="#c4bfa0" stroke-width="4"/><use href="#bags"/>
          </g>
          <g transform="translate(906 382) scale(.3333)" class="cad">
            <use href="#cab-base"/><path d="M84 218L221 240V438L84 418Z" fill="#5f5c4e"/>
            <use href="#shelf" y="226"/><use href="#shelf" y="274"/><use href="#shelf" y="321"/><path d="M84 409L114 371L221 387V430Z" fill="#99957f"/><path d="M84 409L221 430V438L84 418Z" fill="#c4bfa0"/><use href="#bags"/>
          </g>
          <g transform="translate(1100 412) scale(.3333)" class="cad">
            <use href="#cab-base"/><path d="M84 218L221 240V438L84 418Z" fill="#5f5c4e"/>
            <use href="#shelf" y="226"/><path d="M84 336L130 284L221 300V358Z" fill="#99957f"/><path d="M84 406L132 352L221 366V430Z" fill="#99957f"/><path d="M84 409L221 430V438L84 418Z" fill="#c4bfa0"/><path class="nl" fill="#eee" d="M282 383h5v8h-5z"/>
          </g>
        </svg>
      </div>

      <aside class="navigator">
        <h2 class="title"><i class="knob"></i>Navigator – Project Map</h2>
        <div class="tabs">
          <button class="tab first" aria-label="Project chooser"><svg><path d="M2 4H10V16H2Z" fill="#eef" stroke="#77a"/><path d="M4 8H12V5L18 10L12 15V12H4Z" fill="#bcd4f8" stroke="#117"/></svg><svg class="t6"><use href="#tri-r"/></svg></button>
          <span class="tabset"><button class="tab on" aria-label="Project map"><svg><path d="M3 9L8 4L17 9V16H4V9Z" fill="#f4985a" stroke="#000"/><path d="M2 10L7 4L11 9V16M8 4L14 4L18 9" fill="none" stroke="#000"/></svg></button><button class="tab" aria-label="View map"><svg><path d="M3 4H9V9H17V15H3Z" fill="#ffd870" stroke="#000"/><path d="M11 11H16V14H11Z" fill="#9bd"/></svg></button><button class="tab" aria-label="Layout book"><svg><path d="M3 5H17V15H3Z" fill="#fff" stroke="#000" stroke-width="1.500"/><path d="M12 8H17M12 8V15M12 11H17M12 13H17" stroke="#000"/></svg></button><button class="tab" aria-label="Publisher"><svg><path d="M10 9H16V16H10ZM7 7H13V14H7ZM4 4H10V11H4Z" fill="#fff" stroke="#117"/></svg></button></span>
        </div>
        <div class="treebox">
          <ul class="tree">
            <li class="d2"><i></i><svg><use href="#t-story"/></svg>1. Story</li>
            <li class="d2"><i></i><svg><use href="#t-story"/></svg>0. Ground Floor</li>
            <li class="d1"><i></i><svg><use href="#t-sec"/></svg>Sections</li>
            <li class="d1"><svg class="tri"><use href="#tri-d"/></svg><svg><use href="#t-sec"/></svg>Elevations</li>
            <li class="d2"><i></i><svg><use href="#t-house"/></svg>East Elevation (Auto)</li>
            <li class="d2"><i></i><svg><use href="#t-house"/></svg>North Elevation</li>
            <li class="d2"><i></i><svg><use href="#t-house"/></svg>South Elevation</li>
            <li class="d2"><i></i><svg><use href="#t-house"/></svg>West Elevation (Auto)</li>
            <li class="d1"><i></i><svg><use href="#t-int"/></svg>Interior Elevations</li>
            <li class="d1"><i></i><svg><use href="#t-wor"/></svg>Worksheets</li>
            <li class="d1"><i></i><svg><use href="#t-det"/></svg>Details</li>
            <li class="d1"><i></i><svg><use href="#t-doc"/></svg>3D Documents</li>
            <li class="d1"><svg class="tri"><use href="#tri-d"/></svg><svg><use href="#t-3d"/></svg>3D</li>
            <li class="d2"><i></i><svg><use href="#t-cam"/></svg>Generic Perspective</li>
            <li class="d2 sel"><i></i><svg><use href="#t-axo"/></svg>Generic Axonometry</li>
            <li class="d1"><svg class="tri"><use href="#tri-d"/></svg><svg><use href="#t-sch"/></svg>Schedules</li>
            <li class="d2"><svg class="tri"><use href="#tri-d"/></svg><svg><use href="#t-elem"/></svg>Element</li>
            <li class="d3"><i></i><svg><use href="#t-list"/></svg>Door List</li>
            <li class="d3"><i></i><svg><use href="#t-list"/></svg>Object Inventory</li>
            <li class="d3"><i></i><svg><use href="#t-list"/></svg>Wall List</li>
            <li class="d3"><i></i><svg><use href="#t-list"/></svg>Window List</li>
            <li class="d2"><svg class="tri"><use href="#tri-r"/></svg><svg><use href="#t-comp"/></svg>Component</li>
            <li class="d1"><svg class="tri"><use href="#tri-d"/></svg><svg><use href="#t-idx"/></svg>Project Indexes</li>
            <li class="d2"><i></i><svg><use href="#t-dl"/></svg>Drawing List</li>
            <li class="d2"><i></i><svg><use href="#t-si"/></svg>Sheet Index</li>
            <li class="d2"><i></i><svg><use href="#t-vl"/></svg>View List</li>
            <li class="d1"><svg class="tri"><use href="#tri-r"/></svg><svg><use href="#t-info"/></svg>Lists</li>
            <li class="d1"><svg class="tri"><use href="#tri-r"/></svg><svg><use href="#t-info"/></svg>Info</li>
            <li class="d0"><svg class="tri"><use href="#tri-r"/></svg><svg><use href="#t-info"/></svg>Help</li>
          </ul>
          <div class="vscroll"><i class="vspace"></i><i class="vthumb"></i><span class="varr"><svg class="t8"><use href="#tri-u"/></svg><svg class="t8"><use href="#tri-d"/></svg></span></div>
        </div>
        <div class="hscroll nav-h"><i class="hthumb nav-thumb"></i><i class="fillr"></i><svg class="t8"><use href="#tri-l"/></svg><svg class="t8"><use href="#tri-r"/></svg></div>
        <div class="actions"><button class="tb dim" aria-label="New view"><svg><path d="M3 6H16V17H3Z" fill="#f4bfa0" stroke="#77a" stroke-width="1.500"/><path d="M14 1V9M10 5H18M11 2L17 8M17 2L11 8" stroke="#dd5" stroke-width="1.500"/></svg></button><button class="tb dim" aria-label="Delete"><svg><path d="M4 4L16 16M16 4L4 16" stroke="#e88" stroke-width="2.500"/></svg></button></div>
        <h3 class="pill props"><svg class="t8"><use href="#tri-d"/></svg>Properties</h3>
        <div class="proprow"><svg class="s8" viewBox="0 0 8 8"><path d="M0 3L4 0L8 2V6L4 8L0 6Z"/><path d="M1 4L4 4V7L1 5Z" fill="#fff"/></svg><input class="id" aria-label="ID"><input aria-label="Name" value="Generic Axonometry"></div>
        <button class="settings">Settings...</button>
        <svg class="grip"><use href="#grip"/></svg>
      </aside>
    </div>
  </div>
</main>

<footer class="bottom">
  <div class="find"><svg class="t8" viewBox="0 0 8 8"><path d="M1 1L7 7M7 1L1 7" stroke="#777" stroke-width="2"/></svg><span>Find:</span><i class="findbox"><svg><use href="#glass"/></svg></i></div>
  <div class="navbar">
    <button class="nb on" aria-label="Navigator"><svg><path d="M4 5V13M4 9H7M4 13H7" stroke="#000" stroke-width="1.500" stroke-dasharray="1 1"/><path d="M8 9L13 5L19 9V13H9Z" fill="#f4a040" stroke="#000"/></svg></button>
    <button class="nb" aria-label="Zoom window"><svg><path d="M2 3H11V14H2Z" fill="#fff" stroke="#000"/><circle cx="12" cy="7" r="4" fill="#fff" stroke="#137" stroke-width="1.500"/><path d="M15 10L18 14" stroke="#137" stroke-width="2"/></svg></button>
    <button class="nb" aria-label="Previous zoom"><svg><path d="M3 4H17M3 12H17" stroke="#000"/><path d="M2 11L8 8L12 9L18 5" fill="none" stroke="#000" stroke-width="1.500"/></svg></button>
    <button class="nb" aria-label="Zoom"><svg><circle cx="6" cy="7" r="4" fill="#fff" stroke="#137" stroke-width="1.500"/><path d="M9 10L12 14" stroke="#137" stroke-width="2"/><path d="M13 6H19M16 3V9M13 11H19" stroke="#000" stroke-width="1.500"/></svg></button>
    <button class="nb" aria-label="Zoom in"><svg><circle cx="9" cy="7" r="5" fill="#fff" stroke="#000"/><path d="M12 11L16 14" stroke="#000" stroke-width="2"/><path d="M6 7H12M9 4V10" stroke="#000" stroke-width="1.500"/></svg></button>
    <button class="nb" aria-label="Zoom out"><svg><circle cx="9" cy="7" r="5" fill="#fff" stroke="#000"/><path d="M12 11L16 14" stroke="#000" stroke-width="2"/><path d="M6 7H12" stroke="#000" stroke-width="1.500"/></svg></button>
    <button class="nb" aria-label="Pan"><svg><path d="M7 14L3 8L4 7L7 9L6 4L8 4L9 7V2H11L11 7L13 3L14 4L13 8L15 6L16 7L13 14Z" fill="#fff" stroke="#000"/></svg></button>
    <button class="nb" aria-label="Orbit"><svg><path d="M8 13A7 5 0 1 1 16 10M6 10A4 3 0 1 1 14 9" fill="none" stroke="#269" stroke-width="1.500"/><path d="M8 14L14 13L9 9Z" fill="#9cd" stroke="#148"/></svg></button>
    <button class="nb" aria-label="Walk"><svg><use href="#walk"/></svg></button>
    <button class="nb" aria-label="Fit in window"><svg><circle cx="10" cy="8" r="5" fill="#fff" stroke="#000"/><path d="M10 3V6M10 10V13M5 8H8M12 8H15M14 12L17 15" stroke="#000" stroke-width="1.500"/></svg></button>
    <button class="nb" aria-label="Back"><svg><path d="M1 7L5 3V6H8V8H5V11Z"/><circle cx="13" cy="7" r="4" fill="#fff" stroke="#000"/><path d="M16 10L19 14" stroke="#000" stroke-width="2"/></svg></button>
    <button class="nb" aria-label="Forward"><svg><path d="M19 7L15 3V6H12V8H15V11Z" fill="#888"/><circle cx="6" cy="7" r="4" fill="#fff" stroke="#888"/><path d="M9 10L12 14" stroke="#888" stroke-width="2"/></svg></button>
    <div class="bigscroll"><i class="aqua"></i><i class="fillr"></i></div>
    <span class="arrs"><svg class="t6"><use href="#tri-l"/></svg><svg class="t6"><use href="#tri-r"/></svg></span><svg class="grip"><use href="#grip"/></svg>
  </div>
</footer>
</body>
</html>
```
FILE: styles.css
```css
* { box-sizing: border-box; }
body { margin: 0; height: 100vh; display: flex; flex-direction: column; overflow: hidden; background: #fff; color: #000; font: 11px/14px "Noto Sans", "Open Sans", sans-serif; }
button, input { font: inherit; color: inherit; margin: 0; padding: 0; border-radius: 0; }
h2, h3, ul { margin: 0; padding: 0; font-weight: normal; font-size: 11px; list-style: none; }
svg { display: block; flex: none; width: 20px; height: 20px; }
a { color: inherit; text-decoration: none; }
.defs { position: absolute; width: 0; height: 0; }
.t8 { width: 8px; height: 8px; color: #555; }
.t6 { width: 6px; height: 6px; color: #777; }
.s14 { width: 14px; height: 14px; }
.s8 { width: 8px; height: 8px; }
.w30 { width: 30px; }
.w34 { width: 34px; height: 34px; }
.grip { width: 10px; height: 10px; }
.svgtxt { font: 8px "Noto Sans", sans-serif; fill: #666; }
.svgbold { font: bold 10px "Liberation Serif", serif; fill: #668; }
.svgserif { font: 16px "DejaVu Serif", serif; fill: #779; }
.alpha { font: bold 12px "DejaVu Serif", serif; }

.menubar { flex: none; display: flex; align-items: center; height: 19px; padding: 0 20px 0 18px; border-bottom: 1px solid #5f7f9a; background: linear-gradient(#d5f4fd, #a9ccf0); font-size: 14px; line-height: 18px; white-space: nowrap; }
.apple { width: 16px; height: 17px; margin-right: 18px; }
.menus { display: flex; gap: 19px; }
.app { margin-right: 4px; font-weight: bold; }
.status { display: flex; align-items: center; margin-left: auto; }
.status svg { width: 30px; height: 18px; }
.charged { font-size: 12px; }
.clock { margin: 0 15px 0 12px; font-size: 15px; }
.status .spot { width: 16px; height: 16px; }

.toolbar { flex: none; display: flex; align-items: center; gap: 2px; height: 28px; padding-top: 1px; border-bottom: 1px solid #555; background: #ececec; }
.handle { align-self: stretch; flex: none; width: 14px; margin-right: 1px; border-right: 1px solid #aaa; background: linear-gradient(90deg, #ddd, #c8c8c8); }
.handle.second { position: relative; border-left: 1px solid #777; width: 16px; }
.handle .grip, .window-edge .grip { position: absolute; left: -10px; bottom: 0; }
.knob { display: block; flex: none; width: 11px; height: 11px; border: 1px solid #777; border-radius: 50%; background: linear-gradient(#bbb, #f6f6f6); }
.tb { flex: none; display: flex; align-items: center; justify-content: center; width: 22px; height: 22px; border: 1px solid #8b8b8b; background: linear-gradient(#fdfdfd, #f0f0f0); overflow: hidden; }
.tb.wide { width: 38px; gap: 5px; font-size: 12px; }
.tb.slim { width: 11px; }
.tb.dim { border-color: #b5b5b5; background: #eee; }
.tb.on, .big.on { background: linear-gradient(#8e8e8e, #b4b4b4); }
.split { display: flex; gap: 1px; }
.sep { flex: none; width: 1px; height: 22px; margin: 0 1px; background: #888; }
.window-edge { flex: 1; position: relative; align-self: stretch; border-left: 1px solid #555; border-bottom: 4px solid #fff; background: linear-gradient(#c6c6c6, #a0a0a0); box-shadow: inset 0 -1px #555; }

.work { flex: 1; min-height: 0; display: flex; }
.toolbox { flex: none; display: flex; flex-direction: column; width: 93px; border-right: 2px solid #666; border-bottom: 1px solid #666; background: #ececec; }
.title { flex: none; position: relative; display: flex; align-items: center; justify-content: center; height: 15px; padding-left: 16px; border-bottom: 1px solid #aaa; background: linear-gradient(#f2f2f2, #d0d0d0); color: #666; white-space: nowrap; }
.title .knob { position: absolute; left: 1px; top: 1px; }
.pill { flex: none; display: flex; align-items: center; gap: 4px; height: 15px; margin: 2px; padding-left: 13px; border-radius: 8px; background: linear-gradient(90deg, #e2e2e2, #ccc 50%, #dcdcdc); }
.pill.center { justify-content: center; padding: 0 8px 0 0; }
.pill .t8 { color: #888; }
.toolbox > .tools { flex: none; border: 1px solid #999; border-left-color: #bbb; border-bottom: 0; margin-right: 1px; box-shadow: 0 1px #bbb; }
.tool { display: flex; align-items: center; gap: 2px; width: 100%; height: 24px; padding-left: 4px; border: 0; background: none; font-size: 13px; white-space: nowrap; overflow: hidden; }
.tool svg { width: 26px; height: 20px; }
.tool.on { border: 1px solid #777; padding-left: 3px; background: linear-gradient(#8e8e8e, #dcdcdc); }
.doc { flex: 1; min-height: 0; display: flex; border-top: 1px solid #999; }
.grey { flex: 1; min-width: 0; overflow: hidden; border-left: 1px solid #bbb; border-right: 1px solid #aaa; border-bottom: 1px solid #aaa; color: #777; }
.vscroll { flex: none; display: flex; flex-direction: column; width: 12px; background: linear-gradient(90deg, #ccc, #fff 60%, #eee); }
.vthumb { flex: 1; border: 2px solid #999; border-radius: 8px; background: linear-gradient(90deg, #ddd, #fff 50%, #ddd); }
.tb-thumb { flex: none; height: 78%; margin-top: 3px; }
.varr { display: flex; flex-direction: column; align-items: center; gap: 7px; margin-top: auto; padding: 4px 0; background: #f4f4f4; }
.more .grip { margin-left: auto; align-self: flex-end; }

.stage { flex: 1; min-width: 0; display: flex; flex-direction: column; }
.info { flex: none; display: flex; height: 55px; border-bottom: 1px solid #666; background: #ececec; }
.infohandle { flex: none; width: 16px; padding: 1px 2px; border-right: 1px solid #aaa; background: linear-gradient(90deg, #f0f0f0, #ccc); color: #555; }
.infohandle span { display: block; margin-top: 4px; height: 38px; writing-mode: vertical-rl; transform: rotate(180deg); font-size: 12px; line-height: 12px; white-space: nowrap; }
.infobody { flex: 1; min-width: 0; display: flex; flex-direction: column; padding-left: 1px; }
.panels { flex: none; display: flex; height: 40px; padding-top: 1px; }
.panel { flex: none; display: flex; align-items: flex-end; width: 163px; margin-right: 1px; padding: 0 1px 2px 0; border-right: 1px solid #888; border-bottom: 1px solid #888; white-space: nowrap; }
.big { display: flex; align-items: center; justify-content: center; width: 41px; height: 28px; margin-left: -1px; border: 1px solid #888; background: linear-gradient(#f8f8f8, #ededed); }
.big:first-child { margin-left: 0; }
.p-default { justify-content: space-between; padding-left: 1px; font-size: 10px; }
.p-default span { align-self: center; padding-top: 6px; }
.big.lay { width: 33px; }
.big.name { width: 129px; gap: 4px; font-size: 13px; }
.name .t8, .mini .t8 { color: #000; }
.name .t8 { margin-left: 4px; }
.p-part { flex-wrap: wrap; align-content: space-between; justify-content: space-between; align-items: flex-start; }
.p-part b { font-size: 13px; line-height: 16px; }
.mini { display: flex; align-items: center; justify-content: center; width: 16px; height: 16px; border: 1px solid #888; background: #f6f6f6; }
.prevnext { display: flex; margin-left: auto; }
.prevnext .mini { width: 31px; height: 18px; margin-left: -1px; }
.p-floor .big { width: 161px; font-size: 12px; }
.p-height { justify-content: space-between; padding-left: 22px; }
.p-size { justify-content: flex-end; gap: 2px; }
.fields { display: flex; flex-direction: column; gap: 2px; font-size: 10px; }
.fields label, .fields span { display: flex; align-items: center; }
.p-height label { justify-content: space-between; width: 100px; }
.fields span { gap: 4px; }
input { height: 16px; width: 80px; padding: 0 3px; border: 1px solid #999; background: #fff; font-size: 10px; }
.p-size input { width: 60px; }
.p-angle { flex-direction: column; justify-content: space-between; align-items: stretch; }
.line { display: flex; align-items: center; gap: 4px; }
.end { justify-content: flex-end; }
.end svg { height: 16px; }
input[type="checkbox"] { appearance: none; width: 14px; height: 14px; border-radius: 3px; }
.vline { width: 1px; height: 18px; background: #888; }
.hscroll { flex: 1; display: flex; align-items: center; gap: 8px; margin-left: 4px; background: linear-gradient(#d8d8d8, #fff 60%, #eee); }
.panels + .hscroll { margin-top: 3px; }
.hthumb { height: 10px; border: 2px solid #a4a4a4; border-radius: 6px; background: linear-gradient(#eee, #fff); }
.info-thumb { width: 60%; }
.fillr { flex: 1; }

.view { flex: 1; min-height: 0; display: flex; }
.canvas { flex: 1; min-width: 0; overflow: hidden; }
.model { width: 1179px; height: 720px; }
.cad { stroke: #00a11e; stroke-width: 4; stroke-linejoin: round; }
.cad .nl, .nl { stroke: none; }
.thick { stroke-width: 6; }
.navigator { flex: none; position: relative; display: flex; flex-direction: column; width: 166px; border: 1px solid #666; border-width: 0 2px 1px 2px; background: #ececec; }
.navigator .title { height: 16px; padding-left: 14px; }
.tabs { flex: none; display: flex; justify-content: space-between; height: 29px; padding: 3px 0; border-bottom: 1px solid #999; }
.tab { display: flex; align-items: center; justify-content: center; width: 32px; height: 23px; margin-left: -1px; border: 1px solid #888; background: #f4f4f4; overflow: hidden; }
.tab.on { background: linear-gradient(#8e8e8e, #b8b8b8); }
.tab .t6 { color: #000; }
.tabset { display: flex; }
.treebox { flex: 1; min-height: 0; display: flex; background: #fff; }
.tree { flex: 1; min-width: 0; overflow: hidden; }
.tree li { display: flex; align-items: center; height: 19px; gap: 1px; white-space: nowrap; }
.tree svg { width: 16px; height: 16px; }
.tree i { flex: none; width: 10px; }
.tree .tri { width: 10px; height: 10px; color: #8a8a8a; }
.d0 { padding-left: 8px; }
.d1 { padding-left: 22px; }
.d2 { padding-left: 36px; }
.d3 { padding-left: 50px; }
.tree .sel { background: #d2d2d2; font-weight: bold; }
.treebox .vscroll { width: 14px; }
.vspace { flex: none; height: 57px; }
.treebox .varr { padding: 5px 0; background: #f4f4f4; }
.nav-h { flex: none; height: 15px; margin: 0 14px 0 0; padding: 0 4px 0 5px; }
.nav-thumb { width: 56px; height: 14px; border-radius: 8px; }
.actions { flex: none; display: flex; justify-content: flex-end; gap: 1px; padding: 6px 0 4px; border-top: 1px solid #aaa; }
.props { height: 18px; padding-left: 14px; }
.proprow { flex: none; display: flex; align-items: center; gap: 2px; margin: 4px 0; padding-left: 2px; }
.proprow input { flex: 1; min-width: 0; padding: 0 1px; background: #f0f0f0; font-size: 11px; }
.proprow .id { flex: none; width: 33px; margin-left: 3px; }
.settings { flex: none; height: 19px; margin: 2px 12px 8px; border: 1px solid #777; border-radius: 10px; background: linear-gradient(#fff, #eee 50%, #fff); }
.navigator > .grip { position: absolute; right: 0; bottom: 0; }

.bottom { flex: none; display: flex; align-items: flex-end; height: 27px; border-bottom: 1px solid #000; }
.find { flex: none; display: flex; align-items: center; gap: 11px; width: 77px; height: 26px; padding-left: 7px; background: linear-gradient(#ccc, #aaa); color: #555; font-weight: bold; overflow: hidden; }
.find span { flex: none; }
.findbox { flex: none; width: 30px; height: 20px; margin-left: -4px; border: 1px solid #777; border-radius: 10px; background: #ddd; }
.findbox svg { width: 16px; height: 16px; margin: 1px; }
.navbar { flex: 1; min-width: 0; display: flex; align-items: center; height: 14px; border-top: 1px solid #888; background: #f0f0f0; }
.nb { flex: none; display: flex; align-items: flex-start; justify-content: center; width: 24px; height: 13px; border: 0; border-right: 1px solid #666; background: #f6f6f6; overflow: hidden; }
.nb svg { height: 20px; margin-top: -1px; }
.nb.on { background: #aaa; }
.bigscroll { flex: 1; display: flex; height: 13px; margin-left: 5px; padding-left: 1px; border-radius: 0 8px 8px 0; background: linear-gradient(#ccc, #fff 70%); }
.aqua { width: 75%; height: 13px; border: 1px solid #1a55c0; border-radius: 7px; background: linear-gradient(#9fc8f5, #3f94ec 45%, #8fdcff); }
.arrs { display: flex; gap: 11px; margin: 0 9px 0 8px; }
```
